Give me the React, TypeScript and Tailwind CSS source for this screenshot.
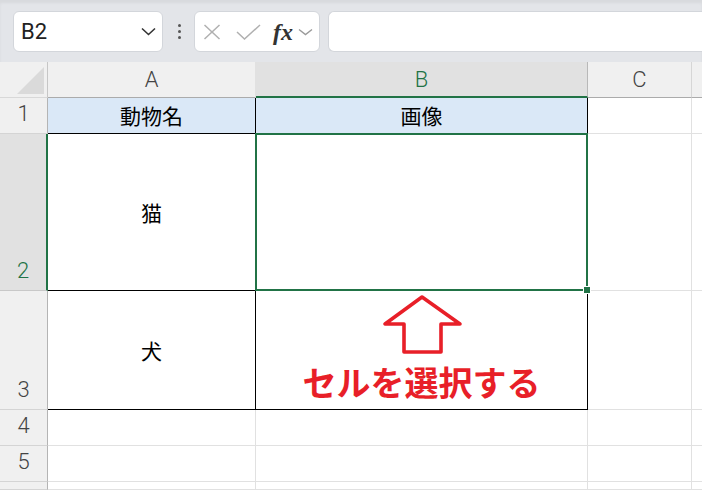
import React from 'react';

const GREEN = '#217346';

function Toolbar() {
  return (
    <div className="h-[62px] bg-[#e3e5e9] shadow-[inset_0_3px_3px_rgba(0,0,0,0.05)] flex items-start pt-[11px]">
      {/* Name box */}
      <div className="ml-[13px] w-[150px] h-[41px] rounded-[6px] bg-white border border-[#d3d6db] flex items-center justify-between pl-[7px] pr-[6px]">
        <span className="text-[22px] leading-none text-[#222] font-['Roboto',sans-serif]">B2</span>
        <svg width="15" height="9" viewBox="0 0 15 9">
          <polyline points="1,1.5 7.5,7.5 14,1.5" fill="none" stroke="#333" strokeWidth="1.6" />
        </svg>
      </div>

      {/* vertical dots */}
      <div className="ml-[15px] h-[41px] flex flex-col items-center justify-center gap-[3px]">
        <span className="w-[3px] h-[3px] rounded-full bg-[#555]" />
        <span className="w-[3px] h-[3px] rounded-full bg-[#555]" />
        <span className="w-[3px] h-[3px] rounded-full bg-[#555]" />
      </div>

      {/* cancel / enter / fx */}
      <div className="ml-[13px] w-[126px] h-[41px] rounded-[6px] bg-white border border-[#d3d6db] flex items-center pl-[8px]">
        <svg width="18" height="16" viewBox="0 0 18 16">
          <line x1="1.5" y1="1" x2="16.5" y2="15" stroke="#b0b0b0" strokeWidth="1.5" />
          <line x1="16.5" y1="1" x2="1.5" y2="15" stroke="#b0b0b0" strokeWidth="1.5" />
        </svg>
        <svg className="ml-[15px]" width="25" height="16" viewBox="0 0 25 16">
          <polyline points="1,8 8.5,15 24,1" fill="none" stroke="#b0b0b0" strokeWidth="1.5" />
        </svg>
        <span className="ml-[12px] text-[24px] leading-none italic font-bold text-[#333] font-['Liberation_Serif',serif]">
          fx
        </span>
        <svg className="ml-[5px]" width="15" height="8" viewBox="0 0 15 8">
          <polyline points="1,1.5 7.5,6.5 14,1.5" fill="none" stroke="#9a9a9a" strokeWidth="1.4" />
        </svg>
      </div>

      {/* formula input */}
      <div className="ml-[8px] flex-1 h-[41px] rounded-l-[6px] bg-white border border-r-0 border-[#d3d6db]" />
    </div>
  );
}

function RowHead({ n, active }: { n?: number; active?: boolean }) {
  return (
    <div
      className={
        active
          ? 'bg-[#e1e1e1] border-r-2 border-r-[#217346] border-b border-b-[#c8c8c8] flex items-end justify-center pb-[6px]'
          : 'bg-[#f0f0f0] border-r border-r-[#b4b4b4] border-b border-b-[#d4d4d4] flex items-end justify-center pb-[6px]'
      }
    >
      {n !== undefined && (
        <span
          className={
            active
              ? 'text-[22px] leading-[26px] font-light text-[#217346]'
              : 'text-[22px] leading-[26px] font-light text-[#444]'
          }
        >
          {n}
        </span>
      )}
    </div>
  );
}

function UpArrow() {
  return (
    <svg width="80" height="62" viewBox="0 0 80 62">
      <polygon
        points="40,3 3,30 22,30 22,58 59,58 59,30 78,30"
        fill="none"
        stroke="#e81f28"
        strokeWidth="3.6"
        strokeLinejoin="round"
      />
    </svg>
  );
}

export default function App() {
  const cellText = "text-[21px] leading-none text-black font-['Noto_Sans_CJK_JP',sans-serif]";
  return (
    <div className="w-[702px] h-[490px] overflow-hidden bg-white font-['Roboto',sans-serif]">
      <Toolbar />

      <div className="grid grid-cols-[48px_208px_332px_104px_1fr] grid-rows-[36px_36px_157px_119px_36px_36px_1fr] h-[428px]">
        {/* column headers */}
        <div className="bg-[#f0f0f0] border-r border-r-[#c6c6c6] border-b border-b-[#d8d8d8] flex items-end justify-end pr-[3px] pb-[3px]">
          <svg width="27" height="27" viewBox="0 0 27 27">
            <polygon points="27,0 27,27 0,27" fill="#dadada" />
          </svg>
        </div>
        <div className="bg-[#f0f0f0] border-r border-r-[#e1e1e1] border-b border-b-[#ababab] flex items-center justify-center">
          <span className="text-[22px] font-light text-[#444]">A</span>
        </div>
        <div className="bg-[#e1e1e1] border-r border-r-[#b8b8b8] border-b-2 border-b-[#217346] flex items-center justify-center">
          <span className="text-[22px] font-light text-[#217346]">B</span>
        </div>
        <div className="bg-[#f0f0f0] border-r border-r-[#d6d6d6] border-b border-b-[#ababab] flex items-center justify-center">
          <span className="text-[22px] font-light text-[#444]">C</span>
        </div>
        <div className="bg-[#f0f0f0] border-b border-b-[#ababab]" />

        {/* row 1 */}
        <RowHead n={1} />
        <div className="bg-[#dae8f7] border-r border-b border-black flex items-center justify-center">
          <span className={cellText}>動物名</span>
        </div>
        <div className="bg-[#dae8f7] border-r border-b border-black flex items-center justify-center">
          <span className={cellText}>画像</span>
        </div>
        <div className="border-r border-b border-[#e1e1e1]" />
        <div className="border-b border-[#e1e1e1]" />

        {/* row 2 */}
        <RowHead n={2} active />
        <div className="border-r border-b border-black flex items-center justify-center">
          <span className={cellText}>猫</span>
        </div>
        <div className="relative border-r border-b border-black">
          <div className="absolute -left-px -top-px -right-px -bottom-px border-2 border-[#217346]">
            <div
              className="absolute -right-[5px] -bottom-[5px] w-[8px] h-[8px] border border-white"
              style={{ backgroundColor: GREEN }}
            />
          </div>
        </div>
        <div className="border-r border-b border-[#e1e1e1]" />
        <div className="border-b border-[#e1e1e1]" />

        {/* row 3 */}
        <RowHead n={3} />
        <div className="border-r border-b border-black flex items-center justify-center">
          <span className={cellText}>犬</span>
        </div>
        <div className="border-r border-b border-black flex flex-col items-center pt-[3px]">
          <UpArrow />
          <span className="mt-[9px] text-[34px] leading-[34px] font-bold text-[#e81f28] font-['Noto_Sans_CJK_JP',sans-serif]">
            セルを選択する
          </span>
        </div>
        <div className="border-r border-b border-[#e1e1e1]" />
        <div className="border-b border-[#e1e1e1]" />

        {/* rows 4 - 6 (row 6 only peeks in at the bottom) */}
        {[4, 5, undefined].map((n, i) => (
          <React.Fragment key={i}>
            <RowHead n={n} />
            <div className="border-r border-b border-[#e1e1e1]" />
            <div className="border-r border-b border-[#e1e1e1]" />
            <div className="border-r border-b border-[#e1e1e1]" />
            <div className="border-b border-[#e1e1e1]" />
          </React.Fragment>
        ))}
      </div>
    </div>
  );
}
